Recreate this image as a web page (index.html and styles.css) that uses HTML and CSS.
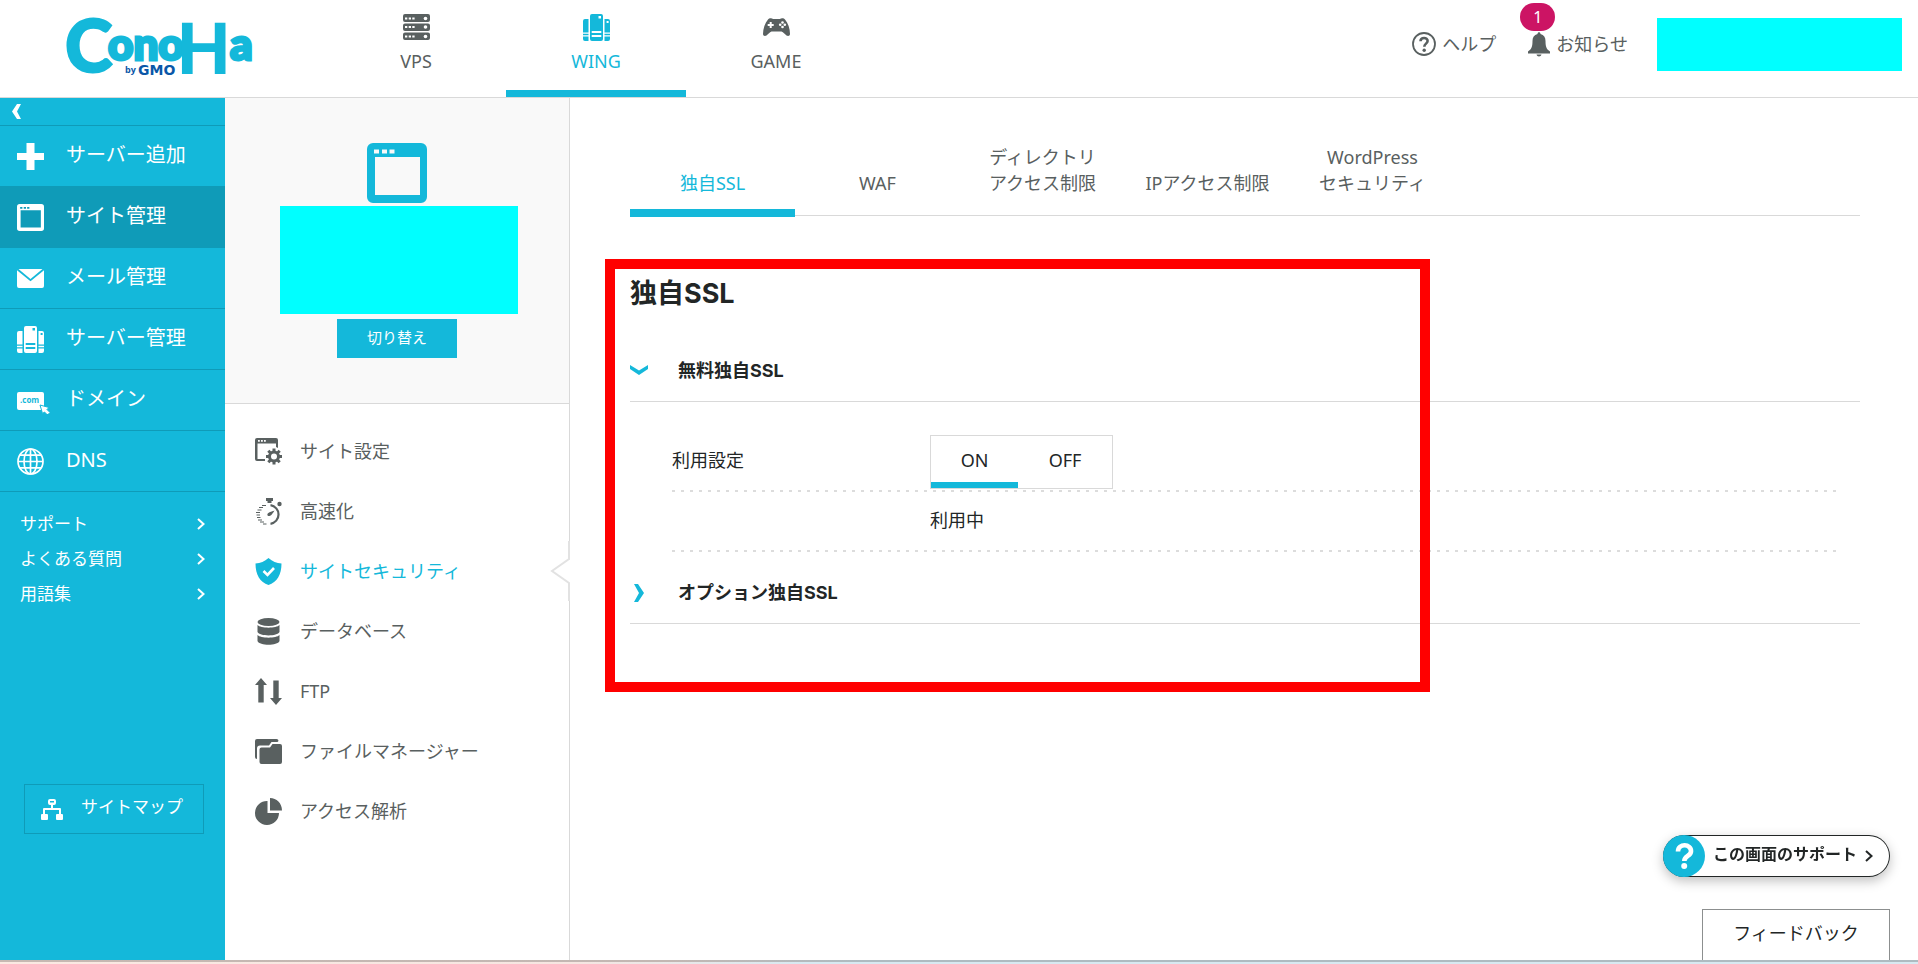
FILE: index.html
```
<!DOCTYPE html>
<html lang="ja">
<head>
<meta charset="utf-8">
<title>独自SSL | ConoHa</title>
<meta name="viewport" content="width=device-width, initial-scale=1">
<link rel="stylesheet" href="styles.css">
</head>
<body>
<svg class="sprite" aria-hidden="true">
  <symbol id="i-wing" viewBox="0 0 27 27">
    <path fill="currentColor" fill-rule="evenodd" d="M9 0h9a2 2 0 0 1 2 2v23a2 2 0 0 1-2 2H9a2 2 0 0 1-2-2V2a2 2 0 0 1 2-2zM8.700 17v2h9.600v-2zM8.700 21v2h9.600v-2zM15.500 2v2.500h2.500V2z"/>
    <path fill="currentColor" d="M2 5h3.500v13.500H0V7a2 2 0 0 1 2-2zM0 19.700h5.500v1.600H0zM0 22.500h5.500V27H2a2 2 0 0 1-2-2z"/>
    <path fill="currentColor" fill-rule="evenodd" d="M21.500 5H25a2 2 0 0 1 2 2v11.500h-5.500zM23.600 7v2h2V7zM21.500 19.700H27v1.600h-5.500zM21.500 22.500H27V25a2 2 0 0 1-2 2h-3.500z"/>
  </symbol>
  <symbol id="i-site" viewBox="0 0 60 60">
    <path fill="currentColor" fill-rule="evenodd" d="M6 0h48a6 6 0 0 1 6 6v48a6 6 0 0 1-6 6H6a6 6 0 0 1-6-6V6a6 6 0 0 1 6-6zM8 14v38h45V14zM7 6.500v4h5v-4zM15 6.500v4h5v-4zM22.500 6.500v4h5v-4z"/>
  </symbol>
  <symbol id="i-next" viewBox="0 0 8 12">
    <path d="M1 1l5.500 5L1 11" fill="none" stroke="currentColor" stroke-width="2"/>
  </symbol>
</svg>

<header class="header">
  <a class="logo" href="#" aria-label="ConoHa by GMO">
    <svg viewBox="0 0 220 96" width="220" height="96">
      <g class="logo-main">
        <text class="logo-c" x="9" y="72">C</text>
        <text class="logo-small" x="52" y="60">ono</text>
        <text class="logo-h" x="121" y="74">H</text>
        <text class="logo-small" x="174" y="60">a</text>
      </g>
      <text class="logo-by" x="69" y="73">by</text>
      <text class="logo-gmo" x="82" y="75">GMO</text>
    </svg>
  </a>
  <nav class="services">
    <a class="service" href="#">
      <svg viewBox="0 0 27 27" width="27" height="27"><path fill="currentColor" fill-rule="evenodd" d="M2 0h23a2 2 0 0 1 2 2v4a2 2 0 0 1-2 2H2a2 2 0 0 1-2-2V2a2 2 0 0 1 2-2zM2 9.500h23a2 2 0 0 1 2 2v3.500a2 2 0 0 1-2 2H2a2 2 0 0 1-2-2v-3.500a2 2 0 0 1 2-2zM2 18.500h23a2 2 0 0 1 2 2V24a2 2 0 0 1-2 2H2a2 2 0 0 1-2-2v-3.500a2 2 0 0 1 2-2z"/><g fill="#fff"><path d="M2 3.500h2.300v2H2zM5.700 3.500H8v2H5.700zM9.300 3.500h2.300v2H9.300zM2 12h2.300v2H2zM5.700 12H8v2H5.700zM9.300 12h2.300v2H9.300zM2 21.500h2.300v2H2zM5.700 21.500H8v2H5.700zM9.300 21.500h2.300v2H9.300z"/><circle cx="22.500" cy="4.500" r="1.800"/><circle cx="22.500" cy="13" r="1.800"/><circle cx="22.500" cy="22.500" r="1.800"/></g></svg>
      <span>VPS</span>
    </a>
    <a class="service is-active" href="#" aria-current="page">
      <svg width="27" height="27"><use href="#i-wing"/></svg>
      <span>WING</span>
    </a>
    <a class="service" href="#">
      <svg viewBox="0 0 27 27" width="27" height="27"><path fill="currentColor" d="M5 5.500C6 4 9 4 10 5h7c1-1 4-1 5 .5 3 3.500 5 9 5 14.500 0 2-2 2.500-3.500 1.500-2-1.500-3-3.500-5-4h-10c-2 .5-3 2.500-5 4C2 22.500 0 22 0 20 0 14.500 2 9 5 5.500z"/><path fill="#fff" d="M6.700 8h2v2h2v2h-2v2h-2v-2h-2v-2h2z"/><g fill="#fff"><circle cx="19.500" cy="8.500" r="1.300"/><circle cx="19.500" cy="13" r="1.300"/><circle cx="17.200" cy="10.800" r="1.300"/><circle cx="21.800" cy="10.800" r="1.300"/></g></svg>
      <span>GAME</span>
    </a>
  </nav>
  <div class="tools">
    <a class="tool" href="#">
      <svg viewBox="0 0 24 24" width="24" height="24"><circle cx="12" cy="12" r="11" fill="none" stroke="currentColor" stroke-width="1.800"/><path d="M8.500 9.200C8.600 4.800 15.700 5 15.600 9c0 2.600-3.300 2.700-3.300 5.700" fill="none" stroke="currentColor" stroke-width="2.600"/><circle cx="12.200" cy="18.300" r="1.700" fill="currentColor"/></svg>
      <span>ヘルプ</span>
    </a>
    <a class="tool notice" href="#">
      <svg viewBox="0 0 22 25" width="22" height="25"><path fill="currentColor" d="M9.500 2c0-2.500 3-2.500 3 0 3.500 1 5 3.500 5 7 0 6 1 8 4.500 10.500v2H0v-2C3.500 17 4.500 15 4.500 9c0-3.500 1.500-6 5-7zM8.500 22.500h5c-.5 2.500-4.500 2.500-5 0z"/></svg>
      <span>お知らせ</span>
      <span class="badge">1</span>
    </a>
    <div class="account"></div>
  </div>
</header>

<div class="layout">
  <aside class="sidebar">
    <button class="collapse" type="button" aria-label="メニューを閉じる">
      <svg viewBox="0 0 10 15" width="10" height="15"><path fill="currentColor" d="M5 0h4L5 7.500 9 15H5L0 7.500z"/></svg>
    </button>
    <nav class="primary">
      <a class="primary-link" href="#"><svg viewBox="0 0 27 27" width="27" height="27"><path fill="currentColor" d="M9.500 0h8v10H27v7h-9.500v10h-8V17H0v-7h9.500z"/></svg><span>サーバー追加</span></a>
      <a class="primary-link is-active" href="#" aria-current="page"><svg width="27" height="27"><use href="#i-site"/></svg><span>サイト管理</span></a>
      <a class="primary-link" href="#"><svg viewBox="0 0 27 27" width="27" height="27"><path fill="currentColor" d="M1.500 4h24L13.500 14zM0 5.200L13.500 16.200 27 5.200V21a2 2 0 0 1-2 2H2a2 2 0 0 1-2-2z"/></svg><span>メール管理</span></a>
      <a class="primary-link" href="#"><svg width="27" height="27"><use href="#i-wing"/></svg><span>サーバー管理</span></a>
      <a class="primary-link" href="#"><svg class="domain-icon" viewBox="0 0 33 27" width="33" height="27"><rect x="0" y="5" width="27" height="18" rx="2" fill="currentColor"/><text class="dotcom" x="3" y="16">.com</text><path fill="currentColor" stroke="#14b8da" d="M23 18l9 2.500-2 2 3 3-2.500 2.500-3-3-2 1.500z"/></svg><span>ドメイン</span></a>
      <a class="primary-link" href="#"><svg viewBox="0 0 27 27" width="27" height="27"><g fill="none" stroke="currentColor" stroke-width="1.700"><circle cx="13.500" cy="13.500" r="12.500"/><ellipse cx="13.500" cy="13.500" rx="6.500" ry="12.500"/><path d="M13.500 1v25M1 13.500h25M3 7.200h21M3 19.800h21"/></g></svg><span>DNS</span></a>
    </nav>
    <nav class="links">
      <a href="#"><span>サポート</span><svg width="8" height="12"><use href="#i-next"/></svg></a>
      <a href="#"><span>よくある質問</span><svg width="8" height="12"><use href="#i-next"/></svg></a>
      <a href="#"><span>用語集</span><svg width="8" height="12"><use href="#i-next"/></svg></a>
    </nav>
    <a class="sitemap" href="#">
      <svg viewBox="0 0 22 21" width="22" height="21"><path fill="currentColor" fill-rule="evenodd" d="M9 0h4a2 2 0 0 1 2 2v2a2 2 0 0 1-2 2h-1v3h7a1 1 0 0 1 1 1v5h1a1 1 0 0 1 1 1v4a1 1 0 0 1-1 1h-5a1 1 0 0 1-1-1v-4a1 1 0 0 1 1-1h2v-4H4v4h2a1 1 0 0 1 1 1v4a1 1 0 0 1-1 1H1a1 1 0 0 1-1-1v-4a1 1 0 0 1 1-1h1v-5a1 1 0 0 1 1-1h7V6H9a2 2 0 0 1-2-2V2a2 2 0 0 1 2-2zm0 2v1.500h4V2z"/></svg>
      <span>サイトマップ</span>
    </a>
  </aside>

  <section class="panel">
    <div class="site-card">
      <svg class="site-icon" width="60" height="60"><use href="#i-site"/></svg>
      <div class="site-name"></div>
      <button class="switch" type="button">切り替え</button>
    </div>
    <nav class="secondary">
      <a href="#"><svg viewBox="0 0 27 27" width="27" height="27"><path fill="currentColor" fill-rule="evenodd" d="M2 0h19a2 2 0 0 1 2 2v8l-2-1V5.500H2.500V21H10v2H2a2 2 0 0 1-2-2V2a2 2 0 0 1 2-2zM3 2v1.700h1.800V2zM6 2v1.700h1.800V2zM9 2v1.700h1.800V2z"/><circle cx="19" cy="18.500" r="4.500" fill="none" stroke="currentColor" stroke-width="3"/><path stroke="currentColor" stroke-width="3" d="M19 10.500v3M19 23.500v3M11 18.500h3M24 18.500h3M13.300 12.800l2 2M22.700 22.200l2 2M13.300 24.200l2-2M22.700 14.800l2-2"/></svg><span>サイト設定</span></a>
      <a href="#"><svg viewBox="0 0 27 27" width="27" height="27"><path fill="currentColor" d="M11 0h7v3h-1.500v2h-4V3H11zM12.500 16c.5-1.500 4-2.500 7-3.500-1.500 2.500-3.500 5.500-5 5.500-1.500.3-2.500-.7-2-2z"/><circle cx="24.500" cy="6" r="2.200" fill="currentColor"/><path d="M15.500 7.200a9.400 9.400 0 0 1 0 18.600" fill="none" stroke="currentColor" stroke-width="2.200"/><path stroke="currentColor" stroke-width="1" d="M7 7.500h4M4 9.500h4M2.500 12h4M1 14.500h4M1.500 17h3.500M2 19.500h3.500M3 22h4M5 24h4M8 26h3.500"/></svg><span>高速化</span></a>
      <a class="is-active" href="#" aria-current="page"><svg viewBox="0 0 27 27" width="27" height="27"><path fill="currentColor" d="M13.500 0c4 3.500 8 5 13 5.500C26.500 17 22 24 13.500 27 5 24 .5 17 .5 5.500 5.500 5 9.500 3.500 13.500 0z"/><path d="M8.500 13l4 4 6.500-7" fill="none" stroke="#fff" stroke-width="2.600"/></svg><span>サイトセキュリティ</span>
        <svg class="notch" viewBox="0 0 20 60" width="20" height="60"><path d="M20 18v25L2 30z" fill="#fff"/><path d="M19 0v18L2 30l17 12v18" fill="none" stroke="#e2e2e2" stroke-width="2"/></svg></a>
      <a href="#"><svg viewBox="0 0 27 27" width="27" height="27"><ellipse cx="13.500" cy="4" rx="11" ry="4" fill="currentColor"/><path fill="currentColor" d="M2.500 7c3 3.500 19 3.500 22 0v7c-2 4.500-20 4.500-22 0zM2.500 17c3 3.500 19 3.500 22 0v6c-2 5-20 5-22 0z"/></svg><span>データベース</span></a>
      <a href="#"><svg viewBox="0 0 27 27" width="27" height="27"><path fill="currentColor" d="M6 0l6 7H8.700v17.500H3.300V7H0zM21 27l-6-7h3.300V2.500h5.400V20H27z"/></svg><span>FTP</span></a>
      <a href="#"><svg viewBox="0 0 27 27" width="27" height="27"><path fill="currentColor" d="M2 1h19.500a2 2 0 0 1 2 2l-1 1h-6l-2.500 3.500H5a3 3 0 0 0-3 3V21a2 2 0 0 1-2-2V3a2 2 0 0 1 2-2z"/><path fill="currentColor" d="M6.500 9.500H15L17.500 6H25a2 2 0 0 1 2 2v16a2 2 0 0 1-2 2H6.500a2 2 0 0 1-2-2V11.500a2 2 0 0 1 2-2z"/></svg><span>ファイルマネージャー</span></a>
      <a href="#"><svg viewBox="0 0 27 27" width="27" height="27"><path fill="currentColor" d="M12.500 3v12H24A12 12 0 1 1 12.500 3zM15 0c6.500 0 12 5 12 12.500H15z"/></svg><span>アクセス解析</span></a>
    </nav>
  </section>

  <main class="main">
    <nav class="tabs">
      <a class="is-active" href="#" aria-current="page">独自SSL</a>
      <a href="#">WAF</a>
      <a href="#">ディレクトリ<br>アクセス制限</a>
      <a href="#">IPアクセス制限</a>
      <a href="#">WordPress<br>セキュリティ</a>
    </nav>
    <div class="content">
      <h1>独自SSL</h1>
      <h2><button class="accordion" type="button" aria-expanded="true"><svg viewBox="0 0 18 18" width="18" height="18"><path fill="currentColor" d="M0 3l9 5.500L18 3v4l-9 6-9-6z"/></svg><span>無料独自SSL</span></button></h2>
      <div class="settings">
        <div class="row">
          <span class="label" id="use">利用設定</span>
          <div class="toggle" role="radiogroup" aria-labelledby="use">
            <label><input type="radio" name="ssl" checked><span>ON</span></label>
            <label><input type="radio" name="ssl"><span>OFF</span></label>
          </div>
        </div>
        <div class="row">
          <span class="label"></span>
          <span>利用中</span>
        </div>
      </div>
      <h2><button class="accordion" type="button" aria-expanded="false"><svg viewBox="0 0 18 18" width="18" height="18"><path fill="currentColor" d="M4 0h4l6 9-6 9H4l5-9z"/></svg><span>オプション独自SSL</span></button></h2>
      <div class="highlight"></div>
    </div>
  </main>
</div>

<div class="edge"></div>
<div class="floating">
  <a class="help-link" href="#">
    <span class="help-mark"><svg viewBox="0 0 42 42" width="42" height="42"><path d="M15 16.500c0-8.500 13.500-8 13 0-.2 4.500-6.700 4.500-6.700 9.500" fill="none" stroke="#fff" stroke-width="4.600"/><circle cx="21.200" cy="31" r="3" fill="#fff"/></svg></span>
    <span class="help-text">この画面のサポート</span>
    <svg width="8" height="12"><use href="#i-next"/></svg>
  </a>
  <button class="feedback" type="button">フィードバック</button>
</div>
</body>
</html>
```
FILE: styles.css
```
:root {
  --cyan: #14b8da;
  --cyan-dark: #0f9bb8;
  --line: #d9d9d9;
  --gray: #596060;
  --ink: #222626;
  --mask: #00ffff;
}

* { box-sizing: border-box; }

body {
  margin: 0;
  min-height: 100vh;
  display: flex;
  flex-direction: column;
  background: #fff;
  color: var(--ink);
  font: 18px/26px "Noto Sans", "Noto Sans CJK JP", sans-serif;
}

a { color: inherit; text-decoration: none; }
button { font: inherit; color: inherit; border: 0; padding: 0; background: none; cursor: pointer; }
svg { flex: none; }
.sprite { position: absolute; width: 0; height: 0; }

/* Header */
.header {
  display: flex;
  height: 98px;
  border-bottom: 1px solid var(--line);
  color: var(--gray);
}
.logo { width: 326px; padding-left: 56px; flex: none; }
.logo-main { fill: var(--cyan); stroke: var(--cyan); font-family: Lato, sans-serif; font-weight: 900; }
.logo-c { font-size: 72px; stroke-width: 2px; }
.logo-small { font-size: 44px; stroke-width: 3px; }
.logo-h { font: bold 74px "Liberation Sans Narrow", "Liberation Sans", sans-serif; stroke-width: 0; }
.logo-by { fill: #0a57a8; font: bold 9px "Open Sans", sans-serif; }
.logo-gmo { fill: #0a57a8; font: bold 14px "DejaVu Sans", sans-serif; }

.services { display: flex; }
.service {
  width: 180px;
  display: flex;
  flex-direction: column;
  align-items: center;
  gap: 7px;
  padding-top: 14px;
  border-bottom: 7px solid transparent;
}
.service.is-active { color: var(--cyan); border-color: var(--cyan); }

.tools { display: flex; align-items: flex-start; margin-left: auto; padding: 18px 16px 0 0; }
.tool { display: flex; align-items: center; gap: 6px; padding-top: 13px; margin-right: 32px; }
.notice { position: relative; margin-right: 29px; }
.badge {
  position: absolute;
  top: -15px;
  left: -8px;
  width: 35px;
  height: 28px;
  border-radius: 14px;
  background: #cc1464;
  color: #fff;
  font-size: 16px;
  line-height: 28px;
  text-align: center;
}
.account { width: 245px; height: 53px; background: var(--mask); }

/* Layout */
.layout { flex: 1; display: flex; }

.sidebar { width: 225px; flex: none; background: var(--cyan); color: #fff; }
.collapse {
  display: flex;
  align-items: center;
  width: 100%;
  height: 28px;
  padding-left: 12px;
  border-bottom: 1px solid var(--cyan-dark);
}
.primary-link {
  display: flex;
  align-items: center;
  gap: 22px;
  height: 61px;
  padding: 0 0 0 17px;
  border-bottom: 1px solid var(--cyan-dark);
  font-size: 20px;
}
.primary-link span { padding-bottom: 2px; }
.primary-link.is-active { background: var(--cyan-dark); }
.domain-icon { margin-right: -6px; }
.dotcom { fill: var(--cyan); font: bold 8px "Open Sans", sans-serif; }

.links { padding: 14px 20px 0 20px; font-size: 17px; }
.links a { display: flex; align-items: center; justify-content: space-between; height: 35px; }
.sitemap {
  display: flex;
  align-items: center;
  gap: 18px;
  height: 50px;
  margin: 173px 21px 0 24px;
  padding-left: 16px;
  border: 1px solid var(--cyan-dark);
  font-size: 17px;
}
.sitemap span { padding-bottom: 4px; }

/* Site panel */
.panel { width: 345px; flex: none; border-right: 1px solid var(--line); }
.site-card {
  display: flex;
  flex-direction: column;
  align-items: center;
  height: 306px;
  padding-top: 45px;
  background: #f9f9f9;
  border-bottom: 1px solid var(--line);
}
.site-icon { color: var(--cyan); }
.site-name { width: 238px; height: 108px; margin: 3px 0 5px 4px; background: var(--mask); }
.switch { width: 120px; height: 39px; padding-bottom: 4px; background: var(--cyan); color: #fff; font-size: 15px; }
.secondary { padding-top: 17px; color: var(--gray); }
.secondary a {
  position: relative;
  display: flex;
  align-items: center;
  gap: 18px;
  height: 60px;
  padding-left: 30px;
}
.secondary .is-active { color: var(--cyan); }
.notch { position: absolute; right: -1px; top: 0; }

/* Main */
.main { flex: 1; min-width: 0; padding: 44px 58px 0 60px; }
.tabs { display: flex; border-bottom: 1px solid var(--line); color: var(--gray); }
.tabs a {
  width: 165px;
  height: 75px;
  display: flex;
  flex-direction: column;
  justify-content: flex-end;
  margin-bottom: -2px;
  padding-bottom: 13px;
  border-bottom: 8px solid transparent;
  text-align: center;
  white-space: nowrap;
}
.tabs .is-active { color: var(--cyan); border-color: var(--cyan); }

.content { position: relative; padding-top: 61px; }
h1, h2 { font-family: Inter, "Noto Sans CJK JP", sans-serif; }
h1 { margin: 0 0 29px; font-size: 27px; line-height: 34px; }
h2 { margin: 0; font-size: 18px; border-bottom: 1px solid var(--line); }
.accordion { display: flex; align-items: center; gap: 30px; width: 100%; height: 61px; }
.accordion svg { color: var(--cyan); }

.settings { padding: 32px 22px 8px 42px; }
.row { display: flex; align-items: center; height: 60px; padding-bottom: 8px; position: relative; }
.row::after {
  content: "";
  position: absolute;
  left: 0;
  right: 0;
  bottom: 2px;
  height: 2px;
  background: repeating-linear-gradient(90deg, #dcdcdc 0 3px, transparent 3px 9px);
}
.label { width: 258px; }
.toggle { display: flex; height: 54px; margin-top: 4px; border: 1px solid var(--line); }
.toggle label { position: relative; width: 87px; text-align: center; line-height: 48px; cursor: pointer; }
.toggle label + label { width: 94px; }
.toggle input { position: absolute; inset: 0; margin: 0; opacity: 0; }
.toggle span { display: block; height: 52px; }
.toggle input:checked + span { border-bottom: 6px solid var(--cyan); }

.highlight {
  position: absolute;
  left: -25px;
  top: 43px;
  width: 825px;
  height: 433px;
  border: 10px solid #f00;
  pointer-events: none;
}

/* Window edge and floating actions */
.edge {
  height: 4px;
  background:
    linear-gradient(90deg, #c6b8b2 0, #c3b7b3 35%, #aebbc1 45%) 0 0 / 100% 2px no-repeat,
    linear-gradient(90deg, #fae9e2 0, #f6e6e1 30%, #d7e9f1 42%);
}
.floating {
  position: fixed;
  right: 28px;
  bottom: 4px;
  display: flex;
  flex-direction: column;
  align-items: flex-end;
  gap: 32px;
}
.help-link {
  display: flex;
  align-items: center;
  height: 42px;
  gap: 8px;
  padding-right: 17px;
  border-radius: 21px;
  background: #fff;
  box-shadow: inset 0 0 0 1px var(--ink), 0 4px 12px rgba(0, 0, 0, .25);
  font-size: 16px;
  font-weight: bold;
}
.help-mark { display: flex; border-radius: 50%; background: var(--cyan); }
.help-text { padding-bottom: 4px; }
.feedback { width: 188px; height: 51px; padding-bottom: 4px; border: 1px solid #8c8f8f; border-bottom: 0; background: #fff; }
```
